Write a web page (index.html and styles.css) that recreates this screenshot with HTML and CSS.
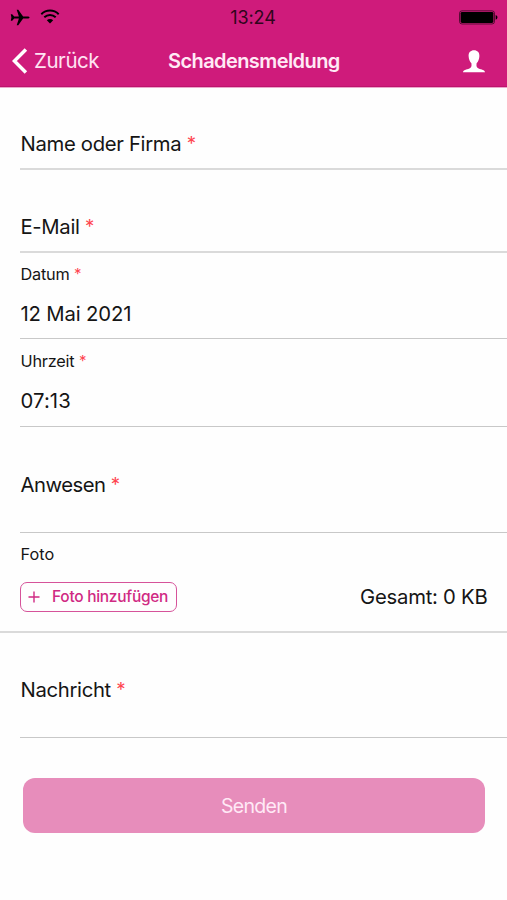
FILE: index.html
```html
<!DOCTYPE html>
<html lang="de">
<head>
<meta charset="utf-8">
<title>Schadensmeldung</title>
<link rel="stylesheet" href="styles.css">
</head>
<body>
<header class="header">
  <div class="status">
    <div class="status-left">
      <svg width="20" height="17" viewBox="0 0 20 18" preserveAspectRatio="none"><path d="M19.500 9c0-.7-.8-1.100-2-1.100h-4.400L8.300.8H6.700l2.200 7.100H4.200L2.200 5.500H.8L1.400 9l-.6 3.500h1.400l2-2.400h4.700l-2.200 7.100h1.600l4.800-7.100h4.400c1.200 0 2-.4 2-1.100z"/></svg>
      <svg width="20" height="15" viewBox="0 0 20 15"><g fill="none" stroke="#000" stroke-width="2"><path d="M1.300 5.200C6.200.4 13.800.4 18.700 5.200"/><path d="M4.300 8.300c3.300-3.100 8.100-3.100 11.400 0"/></g><path d="M10 14.500l-3.200-3.200c1.800-1.600 4.600-1.600 6.400 0z"/></svg>
    </div>
    <div class="time">13:24</div>
    <svg class="battery" width="40" height="15" viewBox="0 0 40 16" preserveAspectRatio="none"><rect x=".5" y=".9" width="35" height="14" rx="2.500" fill="none" stroke="#000" stroke-opacity=".6"/><rect x="1.600" y="2" width="32.800" height="11.800" rx="1.500"/><path d="M36.700 5.400c2.300.8 2.300 4.200 0 5z"/></svg>
  </div>
  <div class="nav">
    <div class="back">
      <svg width="16" height="26" viewBox="0 0 16 26"><path d="M13.900 1.500L2.400 13l11.500 11.500" fill="none" stroke="#fff" stroke-width="3.500"/></svg>
      <span>Zurück</span>
    </div>
    <h1 class="title">Schadensmeldung</h1>
    <svg class="user" width="24" height="23" viewBox="0 0 24 23"><path d="M12 .3c-3.400 0-5.500 2.200-5.400 5.600.1 3 1.300 5.900 2.800 7.300.5 2.800-.2 4.500-2 5.300C4.200 19.800 1.500 19.800.9 22.300h22.200c-.6-2.500-3.300-2.500-6.500-3.800-1.800-.8-2.500-2.500-2-5.300 1.500-1.400 2.700-4.300 2.800-7.300C17.500 2.500 15.400.3 12 .3z" fill="#fff"/></svg>
  </div>
</header>
<main class="form">
  <section class="row row-name thick"><div class="text">Name oder Firma <i>*</i></div></section>
  <section class="row row-mail thick"><div class="text">E-Mail <i>*</i></div></section>
  <section class="row row-date"><div class="label">Datum <i>*</i></div><div class="text t-date">12 Mai 2021</div></section>
  <section class="row row-time"><div class="label">Uhrzeit <i>*</i></div><div class="text t-time">07:13</div></section>
  <section class="row row-place"><div class="text t-place">Anwesen <i>*</i></div></section>
  <section class="row row-photo thick">
    <div class="label">Foto</div>
    <div class="photo-line">
      <button class="add"><svg width="12" height="12" viewBox="0 0 12 12"><path d="M6 .5v11M.5 6h11" stroke="#d02a83" stroke-width="1.400"/></svg><span>Foto hinzufügen</span></button>
      <div class="text t-total">Gesamt: 0 KB</div>
    </div>
  </section>
  <section class="row row-message"><div class="text">Nachricht <i>*</i></div></section>
  <button class="send">Senden</button>
</main>
</body>
</html>
```

FILE: styles.css
```css
* { box-sizing: border-box; }
body {
  margin: 0;
  height: 900px;
  overflow: hidden;
  background: #fefefe;
  color: #151515;
  font-family: Inter, "Liberation Sans", sans-serif;
}
svg { display: block; flex: none; }
button { font-family: inherit; margin: 0; }
.header {
  height: 88px;
  background: #cf1b7b;
  border-bottom: 1px solid #eba6cb;
  box-shadow: inset 0 -1px #bd146d;
}
.status {
  height: 35px;
  display: grid;
  grid-template-columns: 1fr auto 1fr;
  align-items: center;
  padding: 0 8px 0 10px;
}
.status-left { display: flex; gap: 10px; }
.time { color: #30051c; font-size: 18px; line-height: 24px; letter-spacing: -0.1px; margin-right: 3px; }
.battery { justify-self: end; }
.nav {
  height: 52px;
  display: grid;
  grid-template-columns: 156px auto 1fr;
  align-items: center;
  padding: 0 21px 0 12px;
  color: #fff;
}
.back { display: flex; align-items: center; gap: 6px; font-size: 20.5px; line-height: 26px; color: #ffe3f3; letter-spacing: -0.45px; }
.title { margin: 0; font-size: 20px; line-height: 26px; font-weight: 600; letter-spacing: -0.58px; color: #ffeaf6; }
.user { justify-self: end; }
.form { display: flex; flex-direction: column; }
.row { margin-left: 20px; padding-left: 0.5px; border-bottom: 1px solid #c8c8c8; }
.thick { border-bottom: 2px solid #dadada; }
.text { font-size: 20.3px; line-height: 24px; letter-spacing: -0.33px; white-space: nowrap; }
.label { font-size: 16.3px; line-height: 20px; letter-spacing: -0.2px; }
.text i, .label i { font-style: normal; font-size: 0.92em; line-height: 1; vertical-align: 1px; color: #ff4550; }
.row-name { height: 82px; padding-top: 44px; }
.row-mail { height: 83px; padding-top: 45px; }
.row-date { height: 86px; padding-top: 11px; }
.row-time { height: 88px; padding-top: 12px; }
.t-date { margin-top: 18px; letter-spacing: -0.15px; }
.t-time { margin-top: 18px; letter-spacing: 0.1px; }
.t-place { letter-spacing: -0.5px; }
.t-total { letter-spacing: -0.25px; }
.row-place { height: 106px; padding-top: 46px; }
.row-photo { height: 100px; margin-left: 0; padding: 11px 19.5px 0 20px; }
.row-photo .label { padding-left: 0.5px; letter-spacing: 0; }
.photo-line { display: flex; justify-content: space-between; align-items: center; margin-top: 18px; }
.add {
  display: flex;
  align-items: center;
  gap: 12px;
  width: 157px;
  height: 30px;
  padding: 0 0 1px 7px;
  border: 1.5px solid #d6539a;
  border-radius: 7px;
  background: transparent;
  color: #d02a83;
  font-size: 15.5px;
  font-weight: 500;
  letter-spacing: -0.28px;
  white-space: nowrap;
}
.row-message { height: 105px; padding-top: 45px; }
.send {
  height: 55px;
  margin: 40px 22px 0 23px;
  padding: 0;
  border: 0;
  border-radius: 12px;
  background: #e78dbb;
  color: #ffe9f6;
  font-size: 19.5px;
  letter-spacing: -0.7px;
}
```
